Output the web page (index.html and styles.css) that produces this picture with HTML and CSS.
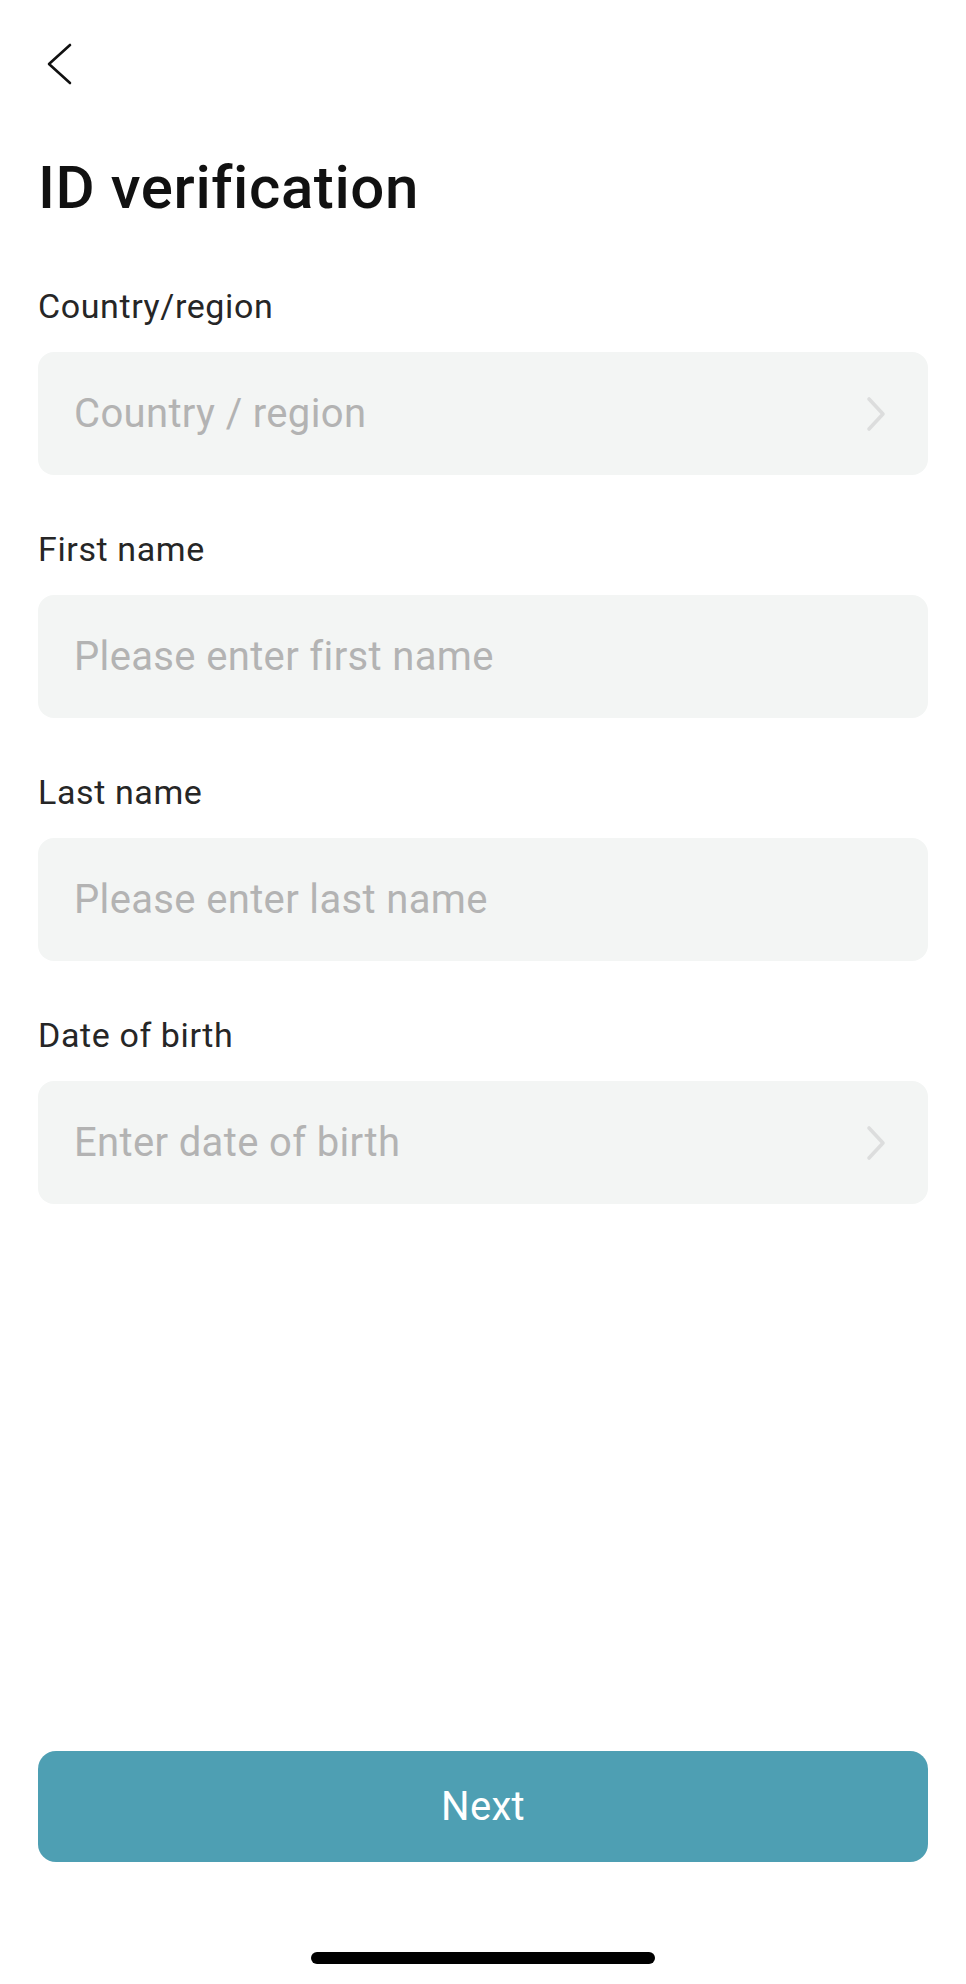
FILE: index.html
```html
<!DOCTYPE html>
<html lang="en">
<head>
    <meta charset="UTF-8">
    <title>ID verification</title>
    <link rel="stylesheet" href="styles.css">
</head>
<body>
    <div class="page">
        <div class="top-bar">
            <button class="back-btn" type="button" aria-label="Back">
                <svg width="26" height="42" viewBox="0 0 26 42">
                    <path d="M24 2 L3 21 L24 40" fill="none" stroke="#111" stroke-width="2.6" stroke-linecap="round" stroke-linejoin="round"/>
                </svg>
            </button>
        </div>

        <h1 class="title">ID verification</h1>

        <form id="id-form" class="form">
            <div class="field">
                <label class="field-label">Country/region</label>
                <div class="field-box select">
                    <span class="placeholder">Country / region</span>
                    <svg class="chevron" width="20" height="36" viewBox="0 0 20 36">
                        <path d="M3 3 L17 18 L3 33" fill="none" stroke="#dcdddd" stroke-width="3.6" stroke-linecap="round" stroke-linejoin="round"/>
                    </svg>
                </div>
            </div>

            <div class="field">
                <label class="field-label" for="first-name">First name</label>
                <div class="field-box">
                    <input type="text" id="first-name" placeholder="Please enter first name" />
                </div>
            </div>

            <div class="field">
                <label class="field-label" for="last-name">Last name</label>
                <div class="field-box">
                    <input type="text" id="last-name" placeholder="Please enter last name" />
                </div>
            </div>

            <div class="field">
                <label class="field-label">Date of birth</label>
                <div class="field-box select">
                    <span class="placeholder">Enter date of birth</span>
                    <svg class="chevron" width="20" height="36" viewBox="0 0 20 36">
                        <path d="M3 3 L17 18 L3 33" fill="none" stroke="#dcdddd" stroke-width="3.6" stroke-linecap="round" stroke-linejoin="round"/>
                    </svg>
                </div>
            </div>
        </form>

        <div class="footer">
            <button class="next-btn" type="submit" form="id-form">Next</button>
            <div class="home-indicator"></div>
        </div>
    </div>
</body>
</html>
```

FILE: styles.css
```css
* {
    box-sizing: border-box;
}

body {
    font-family: 'Roboto', 'Noto Sans', sans-serif;
    background-color: #fff;
    margin: 0;
    padding: 0;
}

.page {
    min-height: 100vh;
    display: flex;
    flex-direction: column;
    padding: 0 38px 20px;
}

.top-bar {
    padding-top: 43px;
    height: 152px;
}

.back-btn {
    background: none;
    border: none;
    padding: 0;
    margin-left: 8px;
    cursor: pointer;
    display: block;
}

.back-btn svg {
    display: block;
}

.title {
    font-size: 60px;
    font-weight: 500;
    line-height: 72px;
    color: #111;
    margin: 0 0 62px;
    letter-spacing: 0.6px;
}

.form {
    display: flex;
    flex-direction: column;
    gap: 54px;
}

.field {
    display: flex;
    flex-direction: column;
    gap: 26px;
}

.field-label {
    font-size: 34px;
    line-height: 40px;
    color: #262626;
    letter-spacing: 0.6px;
}

.field-box {
    height: 123px;
    background-color: #f3f5f4;
    border-radius: 16px;
    padding: 0 42px 0 36px;
    display: flex;
    align-items: center;
    justify-content: space-between;
}

.placeholder,
.field-box input {
    font-family: inherit;
    font-size: 40px;
    line-height: 48px;
    color: #b3b3b3;
    letter-spacing: 0.35px;
}

.field-box input {
    width: 100%;
    border: none;
    background: transparent;
    outline: none;
    padding: 0;
    color: #222;
}

.field-box input::placeholder {
    color: #b3b3b3;
}

.chevron {
    display: block;
    flex-shrink: 0;
}

.footer {
    margin-top: auto;
    display: flex;
    flex-direction: column;
    align-items: center;
}

.next-btn {
    width: 100%;
    height: 111px;
    background-color: #4e9fb3;
    color: #fff;
    border: none;
    border-radius: 18px;
    font-family: inherit;
    font-size: 40px;
    letter-spacing: 0.3px;
    cursor: pointer;
    margin-bottom: 90px;
}

.home-indicator {
    width: 344px;
    height: 12px;
    border-radius: 6px;
    background-color: #000;
}
```
